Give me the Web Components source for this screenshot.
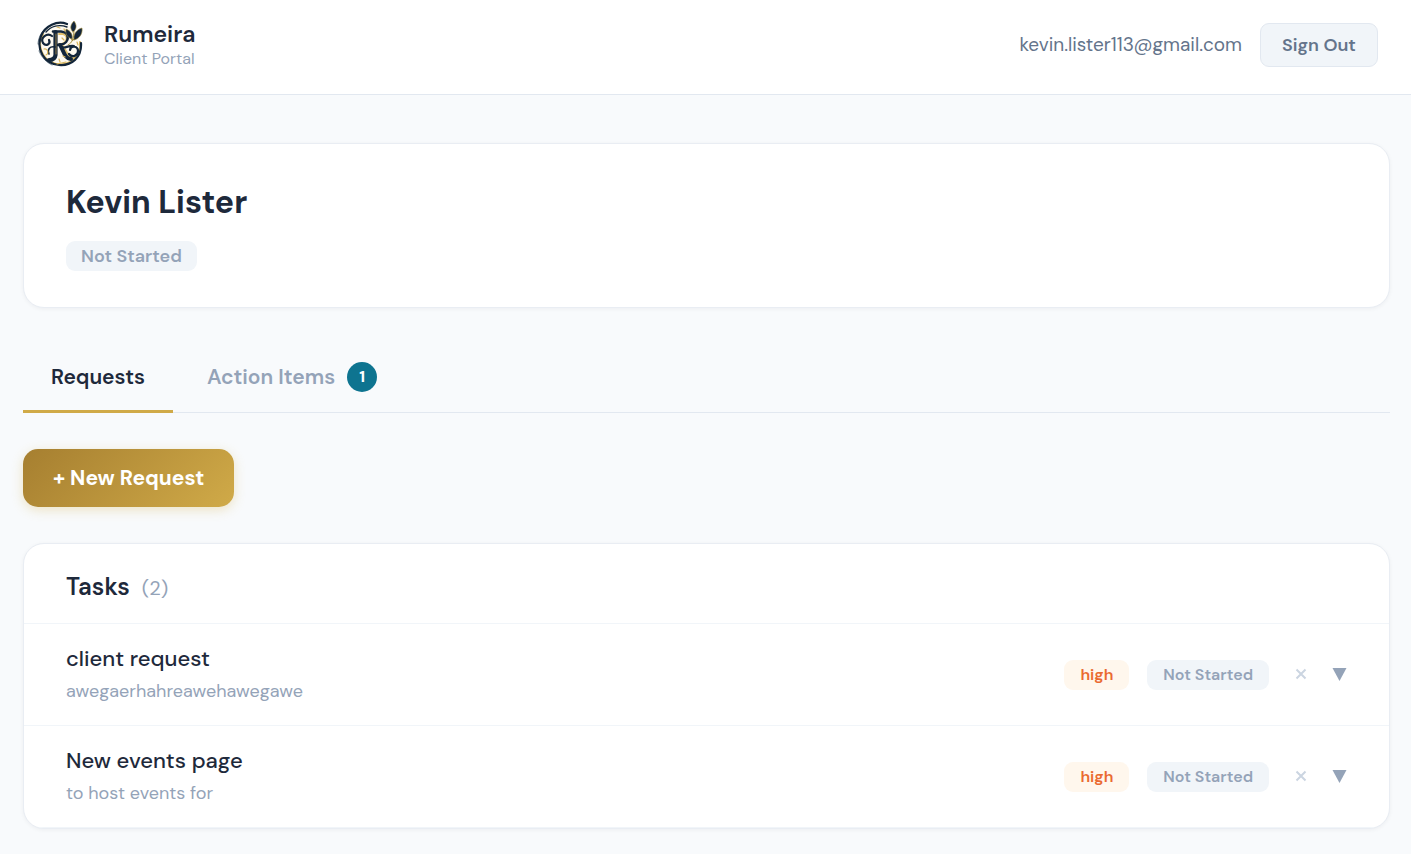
<!DOCTYPE html>
<html lang="en">
<head>
<meta charset="utf-8">
<meta name="viewport" content="width=device-width, initial-scale=1">
<title>Rumeira Client Portal</title>
<style>
  :root {
    --ink: #1e293b; --slate: #64748b; --muted: #94a3b8; --line: #e2e8f0;
    --soft: #f1f5f9; --gold: #d0aa48; --gold-deep: #a67f30; --teal: #0e7490;
  }
  body { margin: 0; background: #f8fafc; color: var(--ink); font-family: "DM Sans", Inter, sans-serif; }
</style>
</head>
<body>
<client-portal></client-portal>

<template id="portal-logo">
  <style>:host { display: block; width: 48px; height: 48px; } svg { display: block; }</style>
  <svg width="48" height="48" viewBox="0 0 48 48" fill="none" stroke-linecap="round" aria-hidden="true">
    <circle cx="24" cy="24" r="20" fill="#fefaf0"/>
    <path d="M2 24C2 19 5 12 9 9M3 31C6 38 10 42 16 45" stroke="#7a8a96" stroke-width="1"/>
    <path d="M7 14A20 20 0 1 0 44 22" stroke="#d9b65c" stroke-width="2"/>
    <path d="M31 4C21 0 9 6 5 16C0 29 8 44 23 45C36 46 46 37 45 23" stroke="#13263a" stroke-width="2.200"/>
    <path d="M10 12C15 6 23 4 31 7" stroke="#13263a" stroke-width="1.400"/>
    <path d="M23 14H27C32 15 32 22 26 24H23M27 26C30 31 32 37 37 38" stroke="#e0c06c" stroke-width="2"/>
    <path d="M17 11.500H25C34 12 34 23 25 24.500L21 25" stroke="#13263a" stroke-width="2.600"/>
    <path d="M19.500 12V35C19 39 16 40 13 40" stroke="#13263a" stroke-width="4.200"/>
    <path d="M24 25C28 31 28 38 35 39" stroke="#13263a" stroke-width="4"/>
    <path d="M20 14V34" stroke="#c9a451" stroke-width=".700"/>
    <path d="M16 16C11 12 4 18 7 23C10 27 15 24 13 20" stroke="#13263a" stroke-width="2.200"/>
    <path d="M19 27C14 26 11 29 13 34" stroke="#13263a" stroke-width="1.600"/>
    <path d="M34 30C35 25 42 26 42 31C42 36 36 38 33 34M26 27C29 29 32 25 38 26" stroke="#13263a" stroke-width="2.200"/>
    <path d="M8 29C12 28 13 34 10 35M26 18L28 20M23 39L24 42M21 44L30 42M27 36L29 37M21 7L24 8M28 9L29 11M41 22L42 25" stroke="#d9b65c" stroke-width="1.200"/>
    <path d="M32 25C36 23 38 19 38 9M36 21L43 14M36 20L32 12" stroke="#a58f3f" stroke-width="1"/>
    <path d="M37 12C33 8 35 4 38 1C41 5 41 9 37 12ZM36 19C31 18 29 13 30 9C35 11 37 15 36 19ZM38 20C37 14 41 9 46 8C47 14 43 19 38 20Z" fill="#13263a" stroke="#a58f3f" stroke-width=".600"/>
  </svg>
</template>

<template id="portal-header">
  <style>
    :host { display: block; background: #fff; border-bottom: 1px solid var(--line); }
    header { display: flex; align-items: center; justify-content: space-between; padding: 20px 33px 24px 36px; }
    .brand, .account { display: flex; align-items: center; }
    .brand { gap: 20px; }
    .name { font-size: 23px; line-height: 28px; font-weight: 600; }
    .sub { font-size: 16px; line-height: 22px; color: var(--muted); }
    .account { gap: 18px; color: var(--slate); }
    .email { font-size: 19px; line-height: 24px; }
    button { box-sizing: border-box; min-width: 118px; height: 44px; padding: 0 20px; border: 1px solid var(--line);
      border-radius: 9px; background: var(--soft); color: inherit; font: 600 18px/24px "DM Sans", Inter, sans-serif; }
    portal-logo { margin-bottom: 2px; }
  </style>
  <header>
    <div class="brand">
      <portal-logo></portal-logo>
      <div><div class="name">Rumeira</div><div class="sub">Client Portal</div></div>
    </div>
    <div class="account"><span class="email"><slot></slot></span><button type="button">Sign Out</button></div>
  </header>
</template>

<template id="portal-card">
  <style>
    :host { display: block; background: #fff; border: 1px solid #e9edf3; border-radius: 21px; box-shadow: 0 1px 4px rgba(15, 23, 42, .05); overflow: hidden; }
  </style>
  <slot></slot>
</template>

<template id="status-badge">
  <style>
    :host { display: inline-block; box-sizing: border-box; padding: 0 16px; border-radius: 9px; background: var(--soft);
      color: var(--muted); font-size: 16px; line-height: 30px; font-weight: 600; text-align: center; white-space: nowrap; }
    :host([tone="high"]) { background: #fff7ed; color: #ea6a30; }
    :host([size="large"]) { font-size: 18px; padding: 0 15px; }
  </style>
  <slot></slot>
</template>

<template id="portal-tabs">
  <style>
    :host { display: block; }
    div { display: flex; gap: 6px; box-shadow: inset 0 -1px var(--line); }
    button { box-sizing: border-box; display: flex; align-items: center; gap: 12px; height: 72px; padding: 2px 28px 0; border: 0;
      border-bottom: 3px solid transparent; background: none; color: var(--muted); font: 600 21px/30px "DM Sans", Inter, sans-serif; }
    button[aria-selected="true"] { color: var(--ink); border-color: var(--gold); }
    .count { width: 30px; border-radius: 50%; background: var(--teal); color: #fff; font-size: 16px; font-weight: 700; text-align: center; }
  </style>
  <div role="tablist">
    <button type="button" role="tab" aria-selected="true">Requests</button>
    <button type="button" role="tab" aria-selected="false">Action Items<span class="count">1</span></button>
  </div>
</template>

<template id="task-row">
  <style>
    :host { display: flex; align-items: center; justify-content: space-between; gap: 24px; padding: 19px 42px 18px; border-bottom: 1px solid var(--soft); }
    .title { font-size: 22px; line-height: 32px; font-weight: 500; }
    .note { font-size: 18px; line-height: 32px; color: var(--muted); }
    .side { display: flex; align-items: center; gap: 18px; }
    .actions { display: flex; align-items: center; gap: 18px; }
    button { display: flex; align-items: center; justify-content: center; height: 30px; padding: 0; border: 0; background: none; }
    .remove { width: 27px; color: #cbd5e1; }
    .open { width: 15px; color: var(--muted); }
  </style>
  <div><div class="title"><slot name="title"></slot></div><div class="note"><slot></slot></div></div>
  <div class="side">
    <status-badge tone="high">high</status-badge>
    <status-badge>Not Started</status-badge>
    <div class="actions">
      <button class="remove" type="button" aria-label="Delete task">
        <svg width="12" height="14" viewBox="0 0 12 14" fill="none" stroke="currentColor" stroke-width="2"><path d="M1.500 1.500L10.500 10.500M10.500 1.500L1.500 10.500"/></svg>
      </button>
      <button class="open" type="button" aria-label="Expand task">
        <svg width="15" height="14" viewBox="0 0 15 14" fill="currentColor"><path d="M.500 0H14.500L7.500 13Z"/></svg>
      </button>
    </div>
  </div>
</template>

<template id="client-portal">
  <style>
    :host { display: block; }
    main { padding: 48px 21px 24px 23px; }
    .profile { padding: 38px 42px 36px; }
    h1 { margin: 0 0 19px; font-size: 32px; line-height: 40px; font-weight: 700; }
    status-badge { display: table; }
    portal-tabs { margin-top: 33px; }
    .new { display: block; min-width: 211px; height: 58px; margin: 36px 0; padding: 0 30px; border: 0; border-radius: 15px;
      background: linear-gradient(135deg, var(--gold-deep), var(--gold)); box-shadow: 0 3px 12px rgba(212, 175, 69, .3);
      color: #fff; font: 700 21px/28px "DM Sans", Inter, sans-serif; white-space: nowrap; }
    .heading { display: flex; align-items: baseline; gap: 12px; padding: 27px 42px 19px; border-bottom: 1px solid var(--soft); }
    h2 { margin: 0; font-size: 24px; line-height: 32px; font-weight: 600; }
    .total { font-size: 20px; line-height: 32px; color: var(--muted); }
  </style>
  <portal-header>kevin.lister113@gmail.com</portal-header>
  <main>
    <portal-card>
      <div class="profile"><h1>Kevin Lister</h1><status-badge size="large">Not Started</status-badge></div>
    </portal-card>
    <portal-tabs></portal-tabs>
    <button class="new" type="button">+ New Request</button>
    <portal-card>
      <div class="heading"><h2>Tasks</h2><span class="total">(2)</span></div>
      <task-row><span slot="title">client request</span>awegaerhahreawehawegawe</task-row>
      <task-row><span slot="title">New events page</span>to host events for</task-row>
    </portal-card>
  </main>
</template>

<script>
  class PortalElement extends HTMLElement {
    constructor() {
      super();
      const template = document.getElementById(this.localName);
      this.attachShadow({ mode: "open" }).append(template.content.cloneNode(true));
    }
  }
  for (const name of ["portal-logo", "portal-header", "portal-card", "status-badge", "portal-tabs", "task-row", "client-portal"]) {
    customElements.define(name, class extends PortalElement {});
  }
</script>
</body>
</html>
